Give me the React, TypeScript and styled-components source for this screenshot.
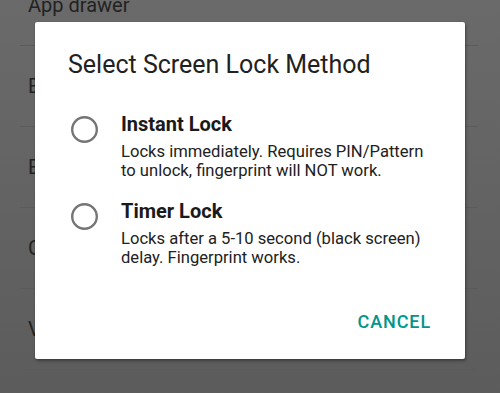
import React from "react"
import styled, { createGlobalStyle } from "styled-components";

const GlobalStyle = createGlobalStyle`
  html, body {
    margin: 0;
    padding: 0;
    width: 500px;
    height: 393px;
    overflow: hidden;
  }
  body {
    font-family: 'Roboto', 'Noto Sans', sans-serif;
  }
`

// dimmed settings screen behind the dialog
export const Screen = styled.div`
    position: relative;
    width: 500px;
    height: 393px;
    overflow: hidden;
    background: linear-gradient(#6a6a6a, #5c5c5c);
`

export const SettingsList = styled.div`
    display: flex;
    flex-direction: column;
    margin-top: -35px;
    padding: 0 22px 0 20px;
`

export const SettingsRow = styled.div`
    display: flex;
    align-items: center;
    height: 80px;
    padding-left: 8px;
    border-bottom: 1px solid #5b5b5b;
    font-size: 20px;
    color: #222222;
    white-space: nowrap;
`

export const Overlay = styled.div`
    position: absolute;
    inset: 0;
    padding: 22px 0 0 35px;
`

export const Dialog = styled.div`
    width: 430px;
    height: 337px;
    box-sizing: border-box;
    display: flex;
    flex-direction: column;
    background-color: #FFFFFF;
    border-radius: 2px;
    box-shadow: 1px 2px 3px rgba(0,0,0,0.35), 0 0 1px rgba(0,0,0,0.3);
    padding-top: 27px;
`

export const DialogTitle = styled.div`
    padding-left: 33px;
    font-size: 25px;
    line-height: 32px;
    color: #212121;
`

export const OptionList = styled.div`
    display: flex;
    flex-direction: column;
    gap: 19px;
    margin-top: 31px;
`

export const Option = styled.div`
    display: grid;
    grid-template-columns: 27px 1fr;
    column-gap: 23px;
    padding-left: 36px;
    padding-right: 10px;
`

export const RadioWrap = styled.div`
    padding-top: 4px;
    height: 28px;
`

export const OptionText = styled.div`
    display: flex;
    flex-direction: column;
    gap: 6px;
`

export const OptionTitle = styled.div`
    font-size: 20px;
    line-height: 24px;
    font-weight: 700;
    color: #1a1a1a;
`

export const OptionDesc = styled.div`
    font-size: 16.6px;
    line-height: 19px;
    color: #212121;
    white-space: nowrap;
`

export const Actions = styled.div`
    display: flex;
    justify-content: flex-end;
    margin-top: auto;
    padding: 0 34px 25px 0;
`

export const TextButton = styled.div`
    font-size: 18px;
    line-height: 24px;
    font-weight: 500;
    letter-spacing: 0.9px;
    color: #009688;
`

const Radio: React.FC = () => (
    <RadioWrap>
        <svg width="28" height="28" viewBox="0 0 28 28">
            <circle cx="13.5" cy="13.5" r="12.3" fill="none" stroke="#757575" strokeWidth="2.4" />
        </svg>
    </RadioWrap>
)

interface IOption { title: string; lines: string[]; }
const LockOption: React.FC<IOption> = ({ title, lines }) => (
    <Option>
        <Radio />
        <OptionText>
            <OptionTitle>{title}</OptionTitle>
            <OptionDesc>{lines.map((l) => <div key={l}>{l}</div>)}</OptionDesc>
        </OptionText>
    </Option>
)

const rows = ["App drawer", "Enable lock", "Edit shortcuts", "Gestures", "Vibration", "Version"]

const App: React.FC = () => {
    return (
        <Screen>
            <GlobalStyle />
            <SettingsList>
                {rows.map((r) => <SettingsRow key={r}>{r}</SettingsRow>)}
            </SettingsList>
            <Overlay>
                <Dialog>
                    <DialogTitle>Select Screen Lock Method</DialogTitle>
                    <OptionList>
                        <LockOption
                            title="Instant Lock"
                            lines={["Locks immediately. Requires PIN/Pattern", "to unlock, fingerprint will NOT work."]}
                        />
                        <LockOption
                            title="Timer Lock"
                            lines={["Locks after a 5-10 second (black screen)", "delay. Fingerprint works."]}
                        />
                    </OptionList>
                    <Actions>
                        <TextButton>CANCEL</TextButton>
                    </Actions>
                </Dialog>
            </Overlay>
        </Screen>
    )
}

export default App
